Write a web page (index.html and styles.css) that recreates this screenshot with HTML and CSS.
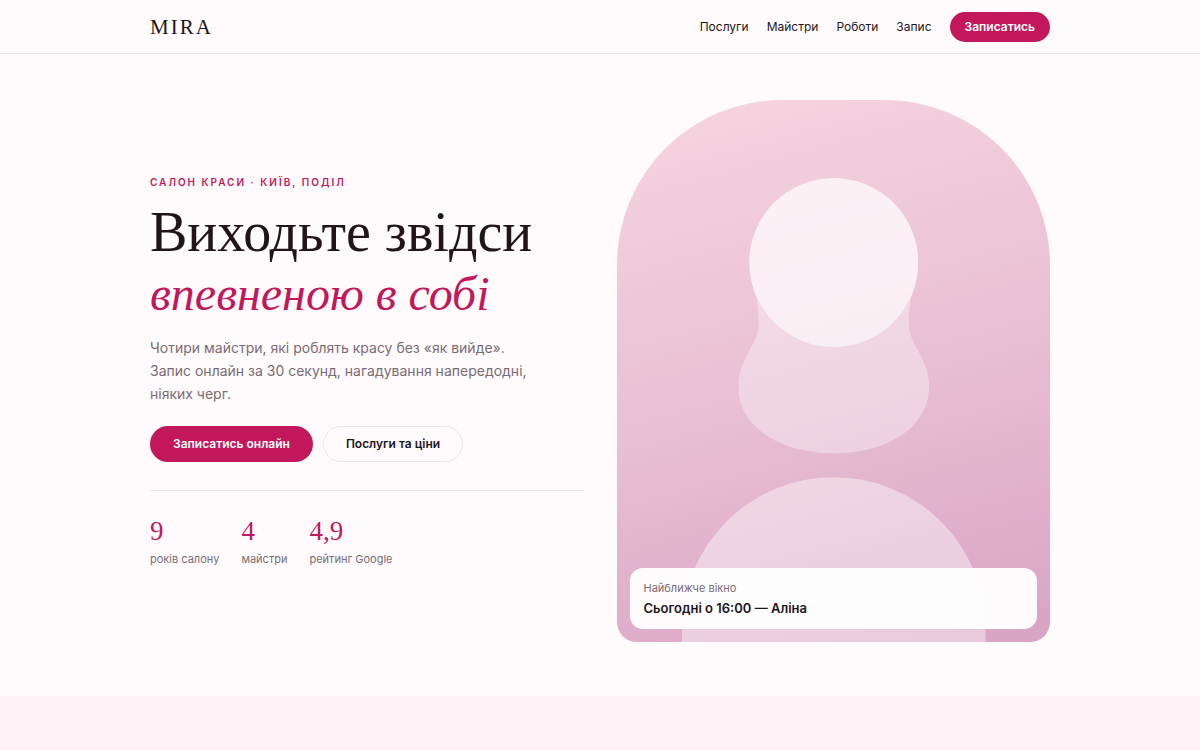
FILE: index.html
```
<!DOCTYPE html>
<html lang="uk">
<head>
    <meta charset="UTF-8">
    <meta name="viewport" content="width=device-width, initial-scale=1.0">
    <title>MIRA — салон краси</title>
    <link rel="stylesheet" href="styles.css">
</head>
<body>

    <header class="header">
        <div class="container header-row">
            <a href="#" class="logo">MIRA</a>
            <nav class="nav">
                <a href="#services">Послуги</a>
                <a href="#masters">Майстри</a>
                <a href="#works">Роботи</a>
                <a href="#booking">Запис</a>
                <button type="button" class="btn btn-primary btn-small">Записатись</button>
            </nav>
        </div>
    </header>

    <main>
        <section class="container hero">
            <div class="hero-text">
                <p class="eyebrow">Салон краси · Київ, Поділ</p>
                <h1>Виходьте звідси <em>впевненою в собі</em></h1>
                <p class="lead">Чотири майстри, які роблять красу без «як вийде». Запис онлайн за 30 секунд, нагадування напередодні, ніяких черг.</p>
                <div class="actions">
                    <button type="button" class="btn btn-primary">Записатись онлайн</button>
                    <button type="button" class="btn btn-outline">Послуги та ціни</button>
                </div>
                <dl class="stats">
                    <div class="stat">
                        <dt>років салону</dt>
                        <dd>9</dd>
                    </div>
                    <div class="stat">
                        <dt>майстри</dt>
                        <dd>4</dd>
                    </div>
                    <div class="stat">
                        <dt>рейтинг Google</dt>
                        <dd>4,9</dd>
                    </div>
                </dl>
            </div>

            <div class="portrait">
                <svg class="portrait-art" viewBox="0 0 400 500" aria-hidden="true">
                    <defs>
                        <clipPath id="belowHead">
                            <path clip-rule="evenodd" d="M0 0H400V500H0Z M122 150a78 78 0 1 0 156 0a78 78 0 1 0 -156 0Z"/>
                        </clipPath>
                    </defs>
                    <path clip-path="url(#belowHead)" fill="#fff" fill-opacity=".35" d="M126 150C126 178 134 200 129 217C124 231 112 243 112 265C112 300 148 326 200 326C252 326 288 300 288 265C288 243 276 231 271 217C266 200 274 178 274 150Z"/>
                    <circle cx="200" cy="150" r="78" fill="#fff" fill-opacity=".72"/>
                    <path fill="#fff" fill-opacity=".42" d="M60 500V488A140 140 0 0 1 340 488V500Z"/>
                </svg>
                <div class="next-slot">
                    <span class="slot-label">Найближче вікно</span>
                    <strong class="slot-time">Сьогодні о 16:00 — Аліна</strong>
                </div>
            </div>
        </section>

        <section class="services" id="services"></section>
    </main>

</body>
</html>
```
FILE: styles.css
```
* {
    box-sizing: border-box;
}
body {
    margin: 0;
    font-family: Inter, "Liberation Sans", sans-serif;
    font-size: 14px;
    color: #21151b;
    background-color: #fffbfd;
}
a {
    color: inherit;
    text-decoration: none;
}
h1, p, dl, dd {
    margin: 0;
}
.container {
    width: 100%;
    max-width: 948px;
    margin: 0 auto;
    padding: 0 24px;
}
.header {
    border-bottom: 1px solid #ece5e9;
}
.header-row {
    display: flex;
    justify-content: space-between;
    align-items: center;
    padding-top: 12px;
    padding-bottom: 11px;
}
.logo {
    font-family: "Liberation Serif", serif;
    font-size: 21px;
    line-height: 28px;
    letter-spacing: 2px;
}
.nav {
    display: flex;
    align-items: center;
    gap: 18px;
    font-size: 12px;
    line-height: 16px;
}
.btn {
    font-family: inherit;
    font-size: 12px;
    font-weight: 600;
    line-height: 16px;
    padding: 9px 22px;
    border: 1px solid transparent;
    border-radius: 999px;
    cursor: pointer;
}
.btn-primary {
    background-color: #c2185b;
    color: #fff;
}
.btn-outline {
    background-color: transparent;
    border-color: #ece5e9;
    color: #21151b;
}
.btn-small {
    padding: 6px 14px;
}
.hero {
    display: grid;
    grid-template-columns: 1fr 1fr;
    gap: 33px;
    align-items: center;
    padding-top: 46px;
    padding-bottom: 54px;
}
.eyebrow {
    font-size: 10px;
    font-weight: 600;
    line-height: 14px;
    letter-spacing: 2px;
    text-transform: uppercase;
    color: #c2185b;
    margin-bottom: 13px;
}
h1 {
    font-family: "Liberation Serif", serif;
    font-size: 56px;
    font-weight: 400;
    line-height: 61px;
}
h1 em {
    display: block;
    font-size: 48px;
    color: #c2185b;
}
.lead {
    max-width: 380px;
    margin-top: 12px;
    font-size: 14px;
    line-height: 23px;
    color: #7a6b73;
}
.actions {
    display: flex;
    gap: 10px;
    margin-top: 21px;
}
.stats {
    display: flex;
    gap: 22px;
    margin-top: 28px;
    padding-top: 24px;
    border-top: 1px solid #ece5e9;
}
.stat {
    display: flex;
    flex-direction: column-reverse;
    gap: 4px;
}
.stat dt {
    font-size: 11px;
    line-height: 16px;
    color: #7a6b73;
}
.stat dd {
    font-family: "Liberation Serif", serif;
    font-size: 27px;
    line-height: 32px;
    color: #c2185b;
}
.portrait {
    position: relative;
    aspect-ratio: 4 / 5;
    border-radius: 165px 165px 20px 20px;
    background: linear-gradient(165deg, #f6d5e0 0%, #e9c0d3 50%, #d9a3c4 100%);
    overflow: hidden;
}
.portrait-art {
    display: block;
    width: 100%;
    height: 100%;
}
/* card that lies over the bottom of the portrait */
.next-slot {
    position: absolute;
    left: 13px;
    right: 13px;
    bottom: 13px;
    padding: 12px 14px;
    border-radius: 13px;
    background-color: rgba(255, 255, 255, 0.95);
}
.slot-label {
    display: block;
    font-size: 11px;
    line-height: 16px;
    color: #7a6b73;
}
.slot-time {
    display: block;
    margin-top: 3px;
    font-size: 13px;
    font-weight: 600;
    line-height: 18px;
}
.services {
    min-height: 54px;
    background-color: #fff0f5;
}
```
